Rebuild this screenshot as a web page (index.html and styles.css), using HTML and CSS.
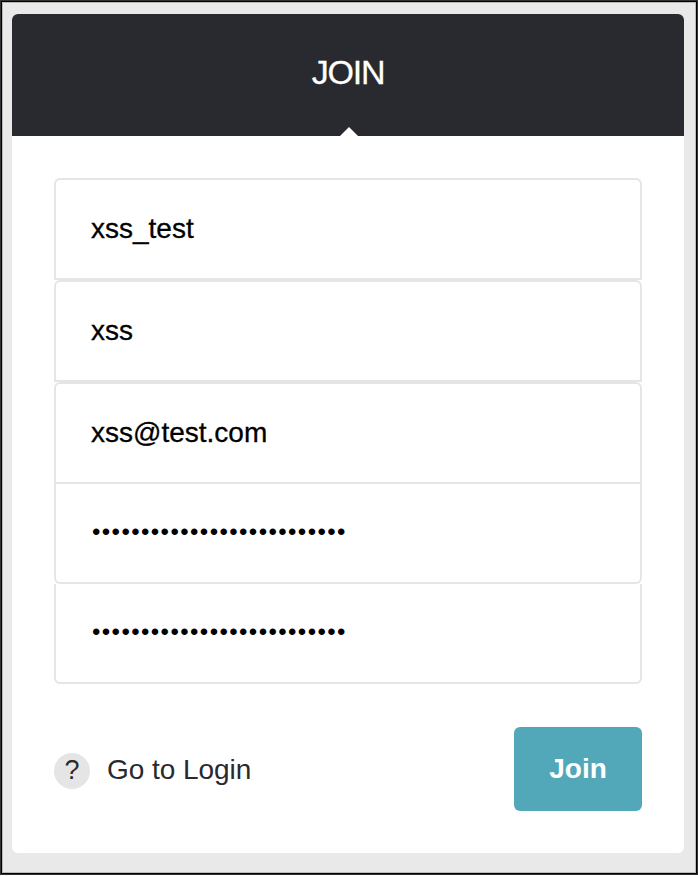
FILE: index.html
```html
<!DOCTYPE html>
<html lang="en">
<head>
<meta charset="utf-8">
<title>Join</title>
<link rel="stylesheet" href="styles.css">
</head>
<body>
<main class="frame">
  <section class="card">
    <header class="card-header">
      <h1 class="title">JOIN</h1>
      <span class="notch"></span>
    </header>
    <form class="form">
      <div class="field field-top"><span class="value">xss_test</span></div>
      <div class="field field-top"><span class="value">xss</span></div>
      <div class="field field-top"><span class="value">xss@test.com</span></div>
      <div class="field field-password"><span>••••••••••••••••••••••••••</span></div>
      <div class="field field-password"><span>••••••••••••••••••••••••••</span></div>
      <div class="actions">
        <a class="login"><span class="help">?</span><span class="login-text">Go to Login</span></a>
        <button class="submit" type="button">Join</button>
      </div>
    </form>
  </section>
</main>
</body>
</html>
```
FILE: styles.css
```css
* { box-sizing: border-box; }
body {
  margin: 0;
  background: #fff;
  font-family: "Liberation Sans", Arial, sans-serif;
}
.frame {
  height: 875px;
  padding: 13px 13px 0 11px;
  border: 1px solid #333;
  background: #e9e9e9;
  box-shadow: inset 0 0 0 1px #000, inset 0 0 0 2px #bbb;
}
.card {
  height: 839px;
  background: #fff;
  border-radius: 6px;
  overflow: hidden;
}
.card-header {
  position: relative;
  display: flex;
  justify-content: center;
  height: 122px;
  padding-top: 38px;
  background: #292a2f;
  color: #fff;
}
.title {
  margin: 0;
  font-size: 34px;
  line-height: 40px;
  font-weight: 400;
  letter-spacing: -1.2px;
  -webkit-text-stroke: 0.3px #fff;
}
.notch {
  position: absolute;
  bottom: 0;
  left: 328px;
  width: 18px;
  height: 9px;
  background: #fff;
  clip-path: polygon(50% 0, 100% 100%, 0 100%);
}
.form {
  padding: 42px 42px 0;
}
.field {
  display: flex;
  align-items: center;
  height: 102px;
  padding: 0 35px;
  border: 2px solid #e5e5e5;
  font-size: 28px;
  color: #000;
}
.value {
  -webkit-text-stroke: 0.3px #000;
}
.field-top {
  border-radius: 6px 6px 0 0;
}
.field-password {
  height: 100px;
  padding: 0 0 2px 36px;
  border-top: 0;
  border-radius: 0 0 6px 6px;
  font-size: 24px;
  letter-spacing: 1.4px;
}
.actions {
  display: flex;
  justify-content: space-between;
  align-items: center;
  margin-top: 43px;
}
.login {
  display: flex;
  align-items: center;
  gap: 17px;
  color: #292a2f;
  font-size: 28px;
}
.login-text {
  padding-top: 2px;
  letter-spacing: -0.05px;
}
.help {
  width: 36px;
  height: 36px;
  margin-top: 4px;
  border-radius: 50%;
  background: #e5e5e5;
  font-size: 27px;
  line-height: 34px;
  text-align: center;
}
.submit {
  width: 128px;
  height: 84px;
  padding: 0;
  border: 0;
  border-radius: 6px;
  background: #52a8b8;
  color: #fff;
  font: bold 28px "Liberation Sans", Arial, sans-serif;
}
```
